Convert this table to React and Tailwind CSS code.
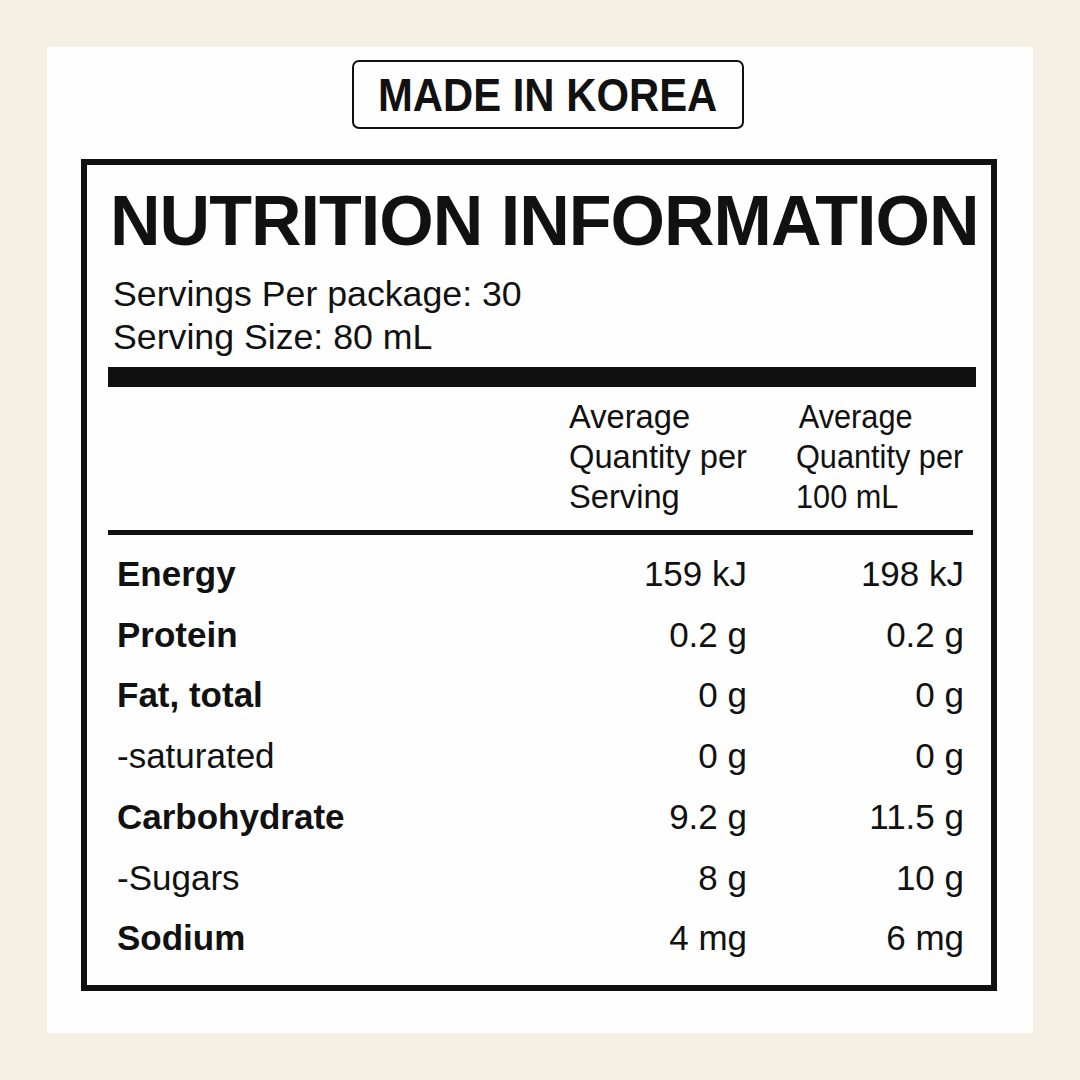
const ROWS = [
  { label: 'Energy', bold: true, serving: '159 kJ', per100: '198 kJ' },
  { label: 'Protein', bold: true, serving: '0.2 g', per100: '0.2 g' },
  { label: 'Fat, total', bold: true, serving: '0 g', per100: '0 g' },
  { label: '-saturated', bold: false, serving: '0 g', per100: '0 g' },
  { label: 'Carbohydrate', bold: true, serving: '9.2 g', per100: '11.5 g' },
  { label: '-Sugars', bold: false, serving: '8 g', per100: '10 g' },
  { label: 'Sodium', bold: true, serving: '4 mg', per100: '6 mg' },
]

export default function App() {
  return (
    <div className="w-[1080px] h-[1080px] bg-[#f5f0e4] p-[47px] font-['Liberation_Sans',Arial,sans-serif] text-[#111]">
      <div className="w-[986px] h-[986px] bg-[#fefefe] pt-[13px] px-[34px]">
        {/* origin badge */}
        <div className="ml-[271px] w-[392px] h-[69px] border-2 border-[#111] rounded-[7px] flex items-center justify-center">
          <span className="inline-block text-[47px] leading-none font-bold scale-x-[0.89] whitespace-nowrap">
            MADE IN KOREA
          </span>
        </div>

        {/* nutrition panel */}
        <div className="mt-[30px] w-[916px] h-[832px] border-[6px] border-[#111] pt-[21px] pl-[21px] pr-[15px]">
          <h1 className="pl-[2px] text-[70px] leading-none font-bold tracking-[-0.014em] whitespace-nowrap">
            NUTRITION INFORMATION
          </h1>
          <div className="mt-[17px] pl-[5px] text-[35.7px] leading-[43px] whitespace-nowrap">
            <p>Servings Per package: 30</p>
            <p>Serving Size: 80 mL</p>
          </div>
          <div className="mt-[8px] h-[20px] bg-[#111]" />

          <div className="mt-[10px] flex text-[33px] leading-[40px] whitespace-nowrap">
            <div className="w-[461px]" />
            <div className="w-[178px] origin-left scale-x-[0.99]">
              <p>Average</p>
              <p>Quantity per</p>
              <p>Serving</p>
            </div>
            <div className="ml-[50px] w-[167px] -translate-x-[1px] origin-left scale-x-[0.93]">
              <p className="pl-[3px]">Average</p>
              <p>Quantity per</p>
              <p>100 mL</p>
            </div>
          </div>
          <div className="mt-[13px] mr-[3px] h-[5px] bg-[#111]" />

          <div className="mt-[9px] text-[35px] leading-[60.7px] whitespace-nowrap">
            {ROWS.map((r) => (
              <div key={r.label} className="flex">
                <div className={`w-[461px] pl-[9px] ${r.bold ? 'font-bold' : ''}`}>{r.label}</div>
                <div className="w-[178px] text-right">{r.serving}</div>
                <div className="ml-[50px] w-[167px] text-right">{r.per100}</div>
              </div>
            ))}
          </div>
        </div>
      </div>
    </div>
  )
}
